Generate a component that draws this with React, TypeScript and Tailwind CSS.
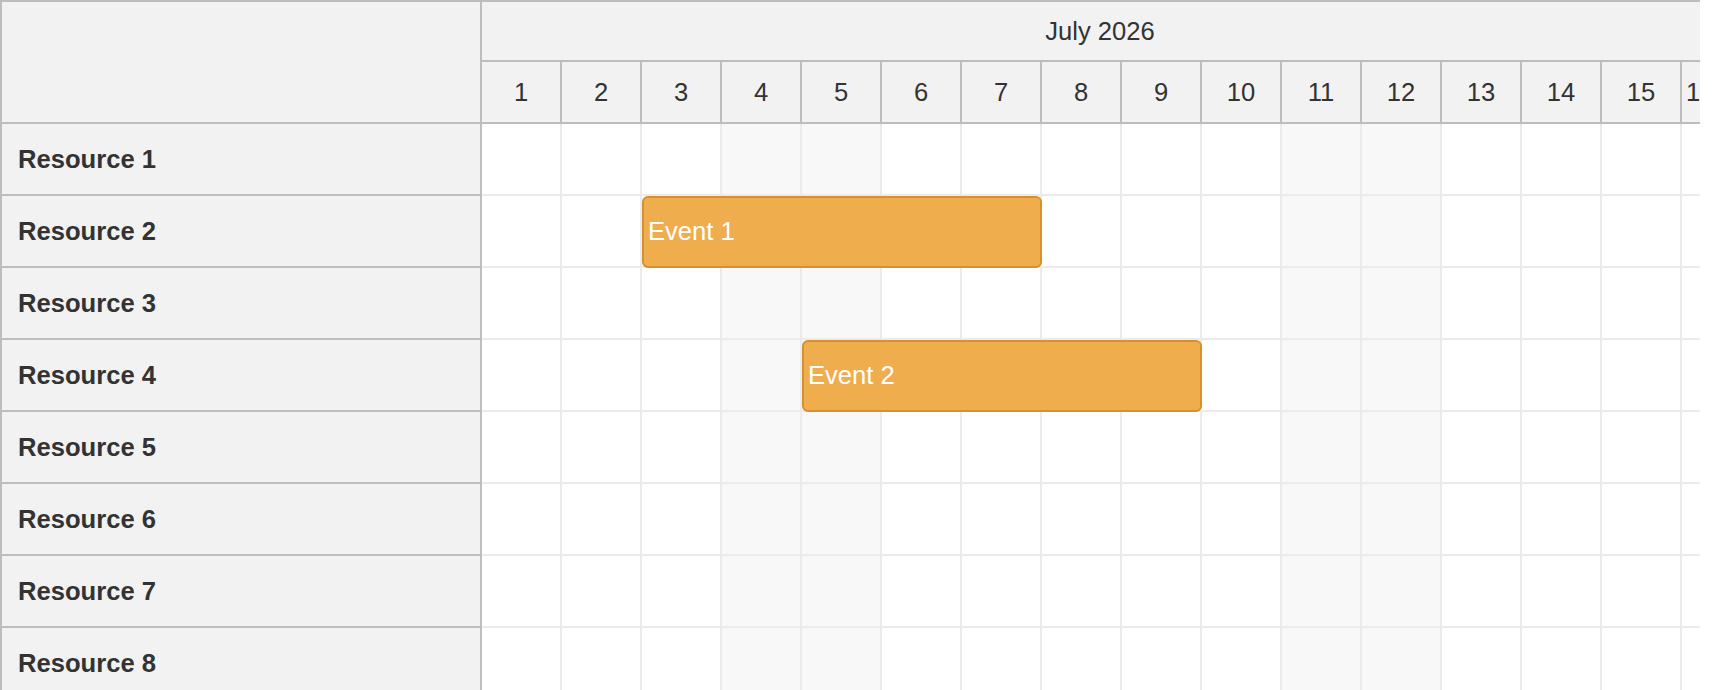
const days = Array.from({ length: 16 }, (_, i) => i + 1);
const weekend = [4, 5, 11, 12];
const resources = Array.from({ length: 8 }, (_, i) => `Resource ${i + 1}`);

const events: Record<number, { name: string; left: string; width: string }> = {
  1: { name: "Event 1", left: "left-[160px]", width: "w-[400px]" },
  3: { name: "Event 2", left: "left-[320px]", width: "w-[400px]" },
};

const App = () => {
  return (
    <div className="w-[1720px] h-[690px] bg-white overflow-hidden font-['Liberation_Sans',Arial,sans-serif] text-[#333]">
      <div className="w-[1700px] border-t-2 border-l-2 border-[#bdbdbd] overflow-hidden">
        {/* header */}
        <div className="flex h-[122px] border-b-2 border-[#bdbdbd] bg-[#f2f2f2]">
          <div className="w-[480px] shrink-0 border-r-2 border-[#bdbdbd]"></div>
          <div className="flex-1 flex flex-col overflow-hidden">
            <div className="h-[60px] shrink-0 border-b-2 border-[#bdbdbd] flex items-center justify-center pl-[18px] text-[25.6px]">
              July 2026
            </div>
            <div className="flex h-[60px]">
              {days.map((d) =>
                d < 16 ? (
                  <div
                    key={d}
                    className="w-[80px] shrink-0 border-r-2 border-[#bdbdbd] flex items-center justify-center text-[25.6px]"
                  >
                    {d}
                  </div>
                ) : (
                  <div key={d} className="w-[80px] shrink-0 flex items-center pl-[4px] text-[25.6px]">
                    {d}
                  </div>
                )
              )}
            </div>
          </div>
        </div>

        {/* rows */}
        {resources.map((r, i) => (
          <div key={r} className="flex h-[72px]">
            <div className="w-[480px] shrink-0 bg-[#f2f2f2] border-r-2 border-b-2 border-[#bdbdbd] flex items-center pl-[16px] text-[25.6px] font-bold">
              {r}
            </div>
            <div className="relative flex-1 flex">
              {days.map((d) => (
                <div
                  key={d}
                  className={`w-[80px] shrink-0 border-r-2 border-b-2 border-[#ebebeb] ${
                    weekend.includes(d) ? "bg-[#f8f8f8]" : "bg-white"
                  }`}
                ></div>
              ))}
              {events[i] && (
                <div
                  className={`absolute top-0 h-[72px] ${events[i].left} ${events[i].width} z-10 bg-[#efad4e] border-2 border-[#d98f2b] rounded-[6px] flex items-center pl-[4px] pb-[1px] text-white text-[25.6px]`}
                >
                  {events[i].name}
                </div>
              )}
            </div>
          </div>
        ))}
      </div>
    </div>
  );
};

export default App;
